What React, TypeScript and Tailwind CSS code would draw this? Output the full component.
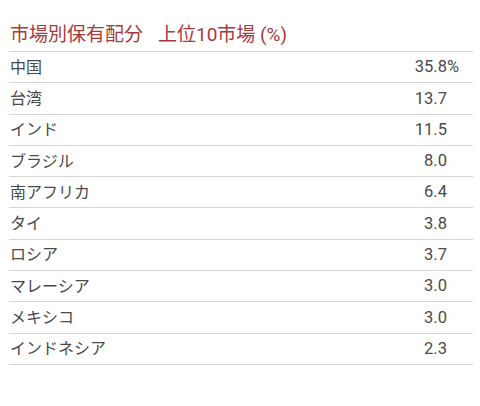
import React from 'react';

interface MarketRow {
  name: string;
  value: string;
  unit?: string;
}

const rows: MarketRow[] = [
  { name: '中国', value: '35.8', unit: '%' },
  { name: '台湾', value: '13.7' },
  { name: 'インド', value: '11.5' },
  { name: 'ブラジル', value: '8.0' },
  { name: '南アフリカ', value: '6.4' },
  { name: 'タイ', value: '3.8' },
  { name: 'ロシア', value: '3.7' },
  { name: 'マレーシア', value: '3.0' },
  { name: 'メキシコ', value: '3.0' },
  { name: 'インドネシア', value: '2.3' },
];

const App: React.FC = () => {
  return (
    <div className="w-[480px] h-[406px] bg-white font-['Roboto','Noto_Sans_CJK_JP',sans-serif]">
      <div className="pl-[9px] pr-[7px] pt-[21px]">
        <h2 className="pl-px h-[31px] text-[19px] leading-[28px] text-[#a63a3c] border-b border-[#d4d4d4]">
          市場別保有配分<span className="ml-[15px]">上位10市場 (%)</span>
        </h2>
        {rows.map((row) => (
          <div
            key={row.name}
            className="flex items-center h-[31.3px] border-b border-[#d4d4d4] text-[16px] text-[#4a4a4a]"
          >
            <span className="flex-1 pl-px pt-[1px]">{row.name}</span>
            <span className="pt-[1px] text-[16.5px]">{row.value}</span>
            <span className="w-[26px] pt-[1px] text-[16.5px] tracking-[1px]">{row.unit}</span>
          </div>
        ))}
      </div>
    </div>
  );
};

export default App;
